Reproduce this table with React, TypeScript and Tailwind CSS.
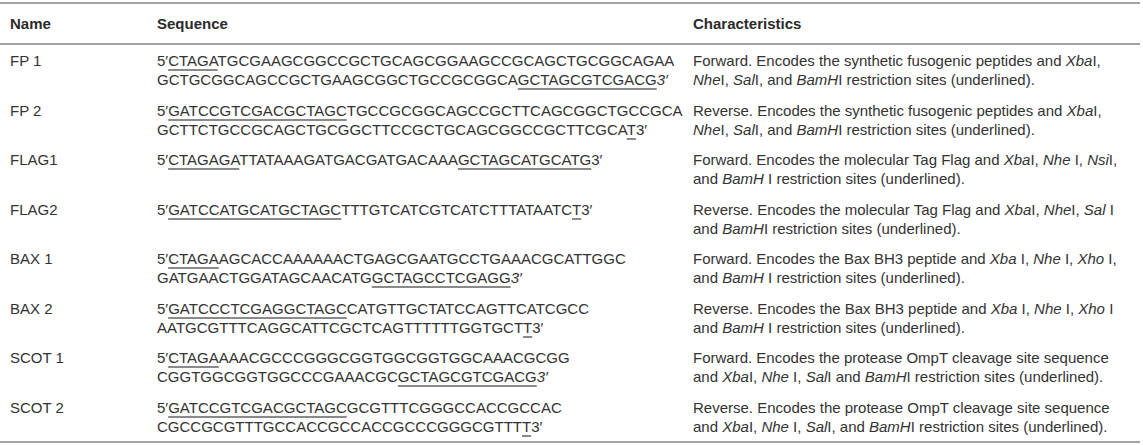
import React from "react";

type Seg = { t: string; u?: boolean; i?: boolean };

const U = (t: string): Seg => ({ t, u: true });
const N = (t: string): Seg => ({ t });
const I = (t: string): Seg => ({ t, i: true });

type Row = { name: string; seq: Seg[][]; ch: Seg[][] };

const rows: Row[] = [
  {
    name: "FP 1",
    seq: [
      [N("5′"), U("CTAGA"), N("TGCGAAGCGGCCGCTGCAGCGGAAGCCGCAGCTGCGGCAGAA")],
      [N("GCTGCGGCAGCCGCTGAAGCGGCTGCCGCGGCA"), U("GCTAGCGTCGACG"), I("3′")],
    ],
    ch: [
      [N("Forward. Encodes the synthetic fusogenic peptides and "), I("Xba"), N("I,")],
      [I("Nhe"), N("I, "), I("Sal"), N("I, and "), I("BamH"), N("I restriction sites (underlined).")],
    ],
  },
  {
    name: "FP 2",
    seq: [
      [N("5′"), U("GATCCGTCGACGCTAGC"), N("TGCCGCGGCAGCCGCTTCAGCGGCTGCCGCA")],
      [N("GCTTCTGCCGCAGCTGCGGCTTCCGCTGCAGCGGCCGCTTCGCA"), U("T"), N("3′")],
    ],
    ch: [
      [N("Reverse. Encodes the synthetic fusogenic peptides and "), I("Xba"), N("I,")],
      [I("Nhe"), N("I, "), I("Sal"), N("I, and "), I("BamH"), N("I restriction sites (underlined).")],
    ],
  },
  {
    name: "FLAG1",
    seq: [[N("5′"), U("CTAGAGA"), N("TTATAAAGATGACGATGACAAA"), U("GCTAGCATGCATG"), N("3′")]],
    ch: [
      [N("Forward. Encodes the molecular Tag Flag and "), I("Xba"), N("I, "), I("Nhe"), N(" I, "), I("Nsi"), N("I,")],
      [N("and "), I("BamH"), N(" I restriction sites (underlined).")],
    ],
  },
  {
    name: "FLAG2",
    seq: [[N("5′"), U("GATCCATGCATGCTAGC"), N("TTTGTCATCGTCATCTTTATAATC"), U("T"), N("3′")]],
    ch: [
      [N("Reverse. Encodes the molecular Tag Flag and "), I("Xba"), N("I, "), I("Nhe"), N("I, "), I("Sal"), N(" I")],
      [N("and "), I("BamH"), N("I restriction sites (underlined).")],
    ],
  },
  {
    name: "BAX 1",
    seq: [
      [N("5′"), U("CTAGA"), N("AGCACCAAAAAACTGAGCGAATGCCTGAAACGCATTGGC")],
      [N("GATGAACTGGATAGCAACATG"), U("GCTAGCCTCGAGG"), I("3′")],
    ],
    ch: [
      [N("Forward. Encodes the Bax BH3 peptide and "), I("Xba"), N(" I, "), I("Nhe"), N(" I, "), I("Xho"), N(" I,")],
      [N("and "), I("BamH"), N(" I restriction sites (underlined).")],
    ],
  },
  {
    name: "BAX 2",
    seq: [
      [N("5′"), U("GATCCCTCGAGGCTAGC"), N("CATGTTGCTATCCAGTTCATCGCC")],
      [N("AATGCGTTTCAGGCATTCGCTCAGTTTTTTGGTGCT"), U("T"), N("3′")],
    ],
    ch: [
      [N("Reverse. Encodes the Bax BH3 peptide and "), I("Xba"), N(" I, "), I("Nhe"), N(" I, "), I("Xho"), N(" I")],
      [N("and "), I("BamH"), N(" I restriction sites (underlined).")],
    ],
  },
  {
    name: "SCOT 1",
    seq: [
      [N("5′"), U("CTAGA"), N("AAACGCCCGGGCGGTGGCGGTGGCAAACGCGG")],
      [N("CGGTGGCGGTGGCCCGAAACGC"), U("GCTAGCGTCGACG"), I("3′")],
    ],
    ch: [
      [N("Forward. Encodes the protease OmpT cleavage site sequence")],
      [N("and "), I("Xba"), N("I, "), I("Nhe"), N(" I, "), I("Sal"), N("I and "), I("BamH"), N("I restriction sites (underlined).")],
    ],
  },
  {
    name: "SCOT 2",
    seq: [
      [N("5′"), U("GATCCGTCGACGCTAGC"), N("GCGTTTCGGGCCACCGCCAC")],
      [N("CGCCGCGTTTGCCACCGCCACCGCCCGGGCGTTT"), U("T"), N("3′")],
    ],
    ch: [
      [N("Reverse. Encodes the protease OmpT cleavage site sequence")],
      [N("and "), I("Xba"), N("I, "), I("Nhe"), N(" I, "), I("Sal"), N("I, and "), I("BamH"), N("I restriction sites (underlined).")],
    ],
  },
];

function Line({ segs }: { segs: Seg[] }) {
  return (
    <div className="whitespace-pre">
      {segs.map((s, k) => (
        <span
          key={k}
          className={
            (s.u ? "underline decoration-[#8a8a8a] decoration-[1.5px] underline-offset-[3px] " : "") +
            (s.i ? "italic" : "")
          }
        >
          {s.t}
        </span>
      ))}
    </div>
  );
}

export default function App() {
  return (
    <div
      className="w-[1143px] h-[445px] bg-white text-[#333333] text-[15px] leading-[19px] pt-[2px]"
      style={{ fontFamily: '"Liberation Sans", Arial, Helvetica, sans-serif' }}
    >
      <div className="w-[1140px] border-t-2 border-b-2 border-[#a3a3a3]">
        <div className="grid grid-cols-[157px_536px_1fr] border-b-2 border-[#a3a3a3] h-[41px] items-center font-bold text-[#2b2b2b]">
          <div className="pl-[10px]">Name</div>
          <div>Sequence</div>
          <div>Characteristics</div>
        </div>
        {rows.map((r, idx) => (
          <div
            key={idx}
            className="grid grid-cols-[157px_536px_1fr] items-start h-[49.5px] pt-[6px]"
          >
            <div className="pl-[10px]">{r.name}</div>
            <div>
              {r.seq.map((l, k) => (
                <Line key={k} segs={l} />
              ))}
            </div>
            <div>
              {r.ch.map((l, k) => (
                <Line key={k} segs={l} />
              ))}
            </div>
          </div>
        ))}
      </div>
    </div>
  );
}
